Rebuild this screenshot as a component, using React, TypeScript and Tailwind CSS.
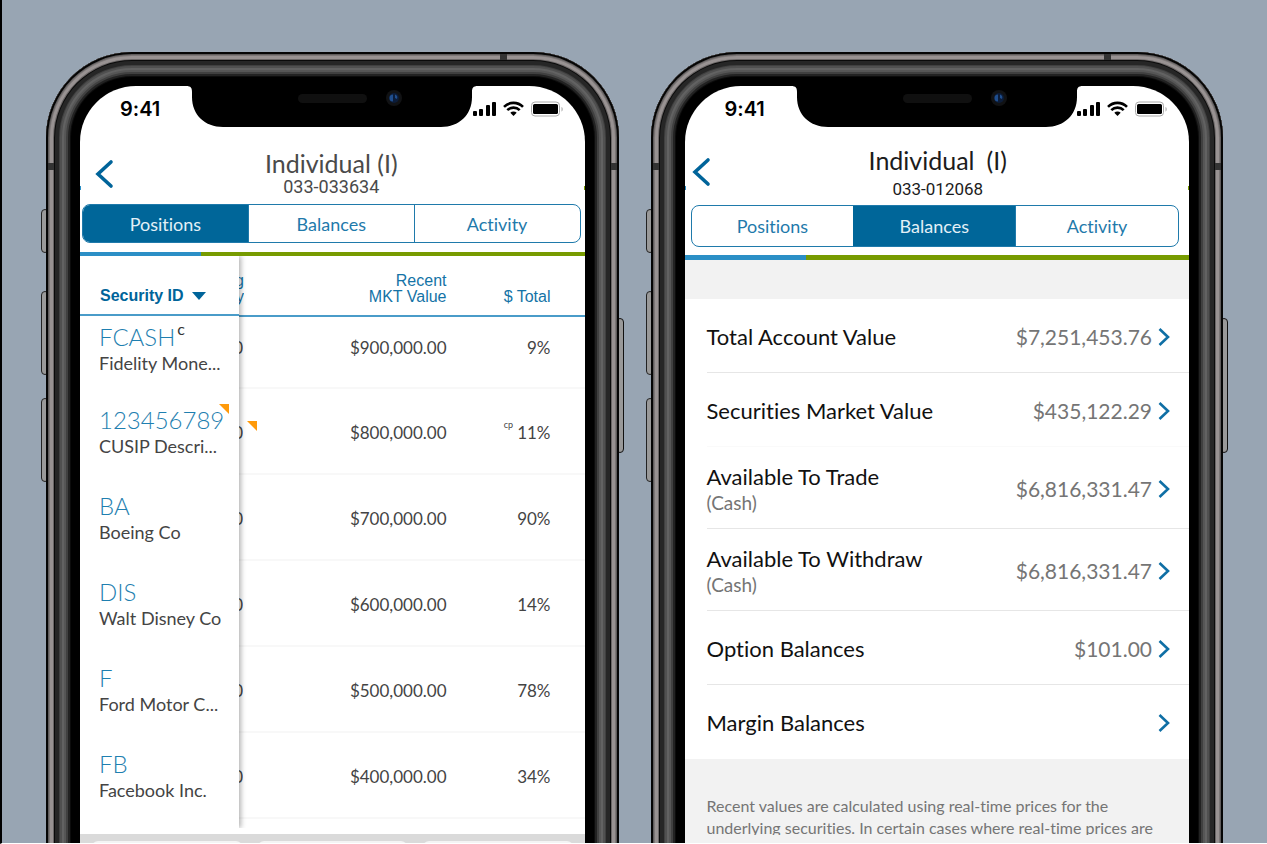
import type { ReactNode } from "react";

type Position = {
  symbol: string;
  mark?: string;
  name: string;
  value: string;
  total: string;
  totalMark?: string;
  flagged?: boolean;
};

type Balance = {
  label: string;
  note?: string;
  amount?: string;
  row: string;
};

const positions: Position[] = [
  { symbol: "FCASH", mark: "c", name: "Fidelity Mone...", value: "$900,000.00", total: "9%" },
  { symbol: "123456789", name: "CUSIP Descri...", value: "$800,000.00", total: "11%", totalMark: "cp", flagged: true },
  { symbol: "BA", name: "Boeing Co", value: "$700,000.00", total: "90%" },
  { symbol: "DIS", name: "Walt Disney Co", value: "$600,000.00", total: "14%" },
  { symbol: "F", name: "Ford Motor C...", value: "$500,000.00", total: "78%" },
  { symbol: "FB", name: "Facebook Inc.", value: "$400,000.00", total: "34%" },
];

const balances: Balance[] = [
  { label: "Total Account Value", amount: "$7,251,453.76", row: "h-[74px] border-[#e6e6e6]" },
  { label: "Securities Market Value", amount: "$435,122.29", row: "h-[74px] border-[#fafafa]" },
  { label: "Available To Trade", note: "(Cash)", amount: "$6,816,331.47", row: "h-[82px] border-[#e6e6e6]" },
  { label: "Available To Withdraw", note: "(Cash)", amount: "$6,816,331.47", row: "h-[82px] border-[#e6e6e6]" },
  { label: "Option Balances", amount: "$101.00", row: "h-[74px] border-[#e6e6e6]" },
  { label: "Margin Balances", row: "h-[74px] border-transparent" },
];

const Notch = () => (
  <svg
    className="absolute left-1/2 top-0 -translate-x-1/2 -mt-px"
    width="292"
    height="42"
    viewBox="0 0 292 42"
  >
    <path d="M0 0H292V1C287 1 286 3 286 7V12C286 30 273 42 255 42H37C19 42 6 30 6 12V7C6 3 5 1 0 1Z" fill="#000" />
    <rect x="112" y="9" width="69" height="9" rx="4.5" fill="#101010" />
    <circle cx="208" cy="13" r="8" fill="#111214" />
    <circle cx="208" cy="13" r="5" fill="#0c1c38" />
    <path d="M207 9.500A3.500 3.500 0 0 0 207 16.500Z M209 9.500A3.500 3.500 0 0 1 211 14L209 13Z" fill="#1f4d8c" />
  </svg>
);

const StatusBar = () => (
  <div className="h-[46px] flex items-center justify-between pl-10 pr-[21px]">
    <span className="font-[Inter,sans-serif] font-semibold text-[20px] leading-6 text-black">
      9:41
    </span>
    <svg width="92" height="16" viewBox="0 0 92 16">
      <g fill="#000">
        <rect x="1" y="10" width="4" height="5" rx="1" />
        <rect x="7" y="8" width="4" height="7" rx="1" />
        <rect x="14" y="4" width="4" height="11" rx="1" />
        <rect x="20" y="1" width="4" height="14" rx="1" />
        <path d="M41.500 15L38.300 11.800A4.600 4.600 0 0 1 44.700 11.800Z" />
      </g>
      <g fill="none" stroke="#000" strokeWidth="2.600">
        <path d="M35.300 9.200A8.800 8.800 0 0 1 47.700 9.200" />
        <path d="M32 5.800A13.500 13.500 0 0 1 51 5.800" />
      </g>
      <rect x="59.500" y="1" width="28" height="14" rx="3.500" fill="none" stroke="#aaa" />
      <rect x="61" y="3" width="25" height="10" rx="1.500" fill="#000" />
      <path d="M89.500 6v4.500c1.600-.6 1.600-3.900 0-4.500Z" fill="#aaa" />
    </svg>
  </div>
);

const Phone = ({ children }: { children: ReactNode }) => (
  <section className="relative -mb-24">
    <span className="absolute -left-[5px] top-[157px] w-2 h-11 rounded-sm border border-[#222] bg-[#999]" />
    <span className="absolute -left-[5px] top-[239px] w-2 h-[84px] rounded-sm border border-[#222] bg-[#999]" />
    <span className="absolute -left-[5px] top-[346px] w-2 h-[84px] rounded-sm border border-[#222] bg-[#999]" />
    <span className="absolute -right-[5px] top-[266px] w-2 h-[135px] rounded-sm border border-[#111] bg-[#999]" />
    <div className="relative h-full rounded-[86px] bg-black px-[34px] pt-[34px] shadow-[inset_0_0_0_2px_#050505,inset_0_0_0_3px_#5f5c5c,inset_0_0_0_4px_#7c7777,inset_0_0_0_7px_#989292,inset_0_0_0_8px_#6a6666,inset_0_0_0_9px_#0a0a0a,inset_0_0_0_13px_#262626,inset_0_0_0_14px_#404040,inset_0_0_0_16px_#505050,inset_0_0_0_18px_#626262,inset_0_0_0_20px_#565656,inset_0_0_0_22px_#404040,inset_0_0_0_24px_#222,inset_0_0_0_25px_#0c0c0c]">
      <span className="absolute left-[2px] top-[111px] w-[6px] h-[7px] bg-[#333]" />
      <span className="absolute right-[2px] top-[111px] w-[6px] h-[7px] bg-[#333]" />
      <span className="absolute right-[112px] top-[2px] w-[7px] h-[6px] bg-[#333]" />
      <div className="relative h-full overflow-hidden rounded-t-[56px] bg-white flex flex-col font-[Lato,sans-serif] [font-variant-ligatures:none]">
        <Notch />
        <span className="absolute left-0 top-[100px] w-px h-1 bg-[#2b8fc6]" />
        <span className="absolute right-0 top-[100px] w-px h-1 bg-[#779b00]" />
        <StatusBar />
        {children}
      </div>
    </div>
  </section>
);

const BackButton = () => (
  <button type="button" aria-label="Back">
    <svg width="20" height="30" viewBox="0 0 20 30" fill="none" stroke="#00649a" strokeWidth="3.600">
      <path d="M17 3L4 15L17 27" strokeLinecap="round" />
    </svg>
  </button>
);

const Tabs = ({ active, className }: { active: string; className: string }) => (
  <nav className={`flex rounded-lg border border-[#1f7aab] overflow-hidden ${className}`}>
    {["Positions", "Balances", "Activity"].map((tab) => (
      <button
        key={tab}
        type="button"
        className={
          tab === active
            ? "flex-1 text-lg bg-[#006699] text-[#e3f0f7]"
            : "flex-1 text-lg text-[#1f7aab] not-first:border-l border-[#1f7aab]"
        }
      >
        {tab}
      </button>
    ))}
  </nav>
);

const Progress = ({ className }: { className: string }) => (
  <div className={`flex shrink-0 ${className}`}>
    <span className="w-[24%] bg-[#2b8fc6]" />
    <span className="flex-1 bg-[#779b00]" />
  </div>
);

const Flag = ({ className }: { className: string }) => (
  <svg className={`absolute ${className}`} width="10" height="10" viewBox="0 0 10 10">
    <path d="M0 0H10V10Z" fill="#ff9a0a" />
  </svg>
);

const Chevron = () => (
  <svg width="12" height="20" viewBox="0 0 12 20" fill="none" stroke="#0f6fa5" strokeWidth="2.600">
    <path d="M1.500 2L10 10L1.500 18" />
  </svg>
);

const PositionsScreen = () => (
  <Phone>
    <header className="h-[72px] shrink-0 flex pl-[14px]">
      <div className="w-8 pt-[27px]">
        <BackButton />
      </div>
      <div className="flex-1 pt-[17px] pr-12 text-center text-[#4a4a4a]">
        <h1 className="text-[25px] leading-7">Individual (I)</h1>
        <p className="font-[Roboto,sans-serif] text-[18px] leading-5">033-033634</p>
      </div>
    </header>
    <Tabs active="Positions" className="h-[39px] shrink-0 ml-0.5 mr-1" />
    <Progress className="mt-[9px] h-1" />
    <div className="flex">
      <div className="relative z-10 w-[159px] h-[572px] bg-white shadow-[2px_0_5px_rgba(0,0,0,0.3)] [clip-path:inset(0_-10px_0_0)]">
        <table className="w-full">
          <thead>
            <tr className="h-[59px] border-b-2 border-[#4a9cc9]">
              <th className="pl-5 pb-2 align-bottom text-left">
                <button type="button" className="flex items-center gap-2 font-['Liberation_Sans',Arial,sans-serif] text-base leading-5 font-bold text-[#00649a]">
                  Security ID
                  <svg width="14" height="8" viewBox="0 0 14 8">
                    <path d="M0 0H14L7 8Z" fill="#00649a" />
                  </svg>
                </button>
              </th>
            </tr>
          </thead>
          <tbody>
            {positions.map((p) => (
              <tr key={p.symbol} className="group h-[86px] first:h-[74px]">
                <td className="pl-[19px] group-first:pb-2">
                  <div className="relative mr-[10px]">
                    <a href="#" className="flex text-[24px] leading-7 font-light text-[#1f7fb0]">
                      {p.symbol}
                      {p.mark && (
                        <span className="pl-0.5 text-base leading-3 font-normal text-[#333]">{p.mark}</span>
                      )}
                    </a>
                    {p.flagged && <Flag className="right-0 -top-0.5" />}
                    <p className="text-[18px] leading-6 text-[#444]">{p.name}</p>
                  </div>
                </td>
              </tr>
            ))}
          </tbody>
        </table>
      </div>
      <div className="flex-1">
        <table className="w-full text-right text-[17px] text-[#444]">
          <thead>
            <tr className="h-[60px] border-b-2 border-[#4a9cc9] font-['Liberation_Sans',Arial,sans-serif] text-base leading-4 text-[#1473a6]">
              <th className="w-[5px] p-0 pb-[10px] align-bottom font-normal">
                <span className="w-[5px] flex justify-end overflow-hidden">g</span>
                <span className="w-[5px] flex justify-end overflow-hidden">y</span>
              </th>
              <th className="pb-[10px] align-bottom font-normal">
                Recent
                <br />
                MKT Value
              </th>
              <th className="pb-[10px] pr-[34px] w-[138px] align-bottom font-normal">$ Total</th>
            </tr>
          </thead>
          <tbody>
            {positions.map((p) => (
              <tr key={p.symbol} className="group h-[86px] first:h-[72px] border-b-2 border-[#f8f8f8]">
                <td className="w-[5px] p-0 pt-1 group-first:pb-3">
                  <span className="relative flex h-6">
                    <span className="w-1 leading-6 flex justify-end overflow-hidden">0</span>
                    {p.flagged && <Flag className="left-2 top-0" />}
                  </span>
                </td>
                <td className="pt-1 group-first:pb-3 leading-6">{p.value}</td>
                <td className="pt-1 group-first:pb-3 leading-6 pr-[34px]">
                  <span className="flex justify-end">
                    {p.totalMark && (
                      <span className="mr-1 text-[9px] leading-2">{p.totalMark}</span>
                    )}
                    {p.total}
                  </span>
                </td>
              </tr>
            ))}
          </tbody>
        </table>
      </div>
    </div>
    <div className="mt-[6px] flex-1 flex gap-4 bg-[#dadada] px-3 pt-[7px]">
      <span className="flex-1 rounded-t-md bg-[#f4f4f4]" />
      <span className="flex-1 rounded-t-md bg-[#f4f4f4]" />
      <span className="flex-1 rounded-t-md bg-[#f4f4f4]" />
    </div>
  </Phone>
);

const BalancesScreen = () => (
  <Phone>
    <header className="h-[73px] shrink-0 flex pl-[6px]">
      <div className="w-8 pt-[25px]">
        <BackButton />
      </div>
      <div className="flex-1 pt-[14px] pr-9 text-center text-[#1c1c1c]">
        <h1 className="text-[25px] leading-7 flex justify-center gap-3">
          <span>Individual</span>
          <span>(I)</span>
        </h1>
        <p className="mt-[5px] font-[Roboto,sans-serif] text-[17px] leading-5">033-012068</p>
      </div>
    </header>
    <Tabs active="Balances" className="h-[42px] shrink-0 ml-[6px] mr-[10px]" />
    <Progress className="mt-2 h-[5px]" />
    <div className="flex-1 bg-[#f2f2f2] pt-[39px]">
      <ul className="bg-white pl-[22px]">
        {balances.map((b) => (
          <li key={b.label} className={`border-b ${b.row}`}>
            <button type="button" className="w-full h-full flex items-center pt-0.5 pr-[19px] text-left">
              <span className="flex-1 text-[22px] leading-7 text-[#111]">
                {b.label}
                {b.note && <span className="block text-[19px] leading-6 text-[#757575]">{b.note}</span>}
              </span>
              <span className="mr-[6px] text-[21px] leading-7 text-[#757575]">{b.amount}</span>
              <Chevron />
            </button>
          </li>
        ))}
      </ul>
      <p className="px-[22px] mt-9 h-[40px] overflow-hidden text-[16px] leading-[22px] text-[#757575]">
        Recent values are calculated using real-time prices for the
        <br />
        underlying securities. In certain cases where real-time prices are
      </p>
    </div>
  </Phone>
);

export default function App() {
  return (
    <main className="h-screen overflow-hidden grid grid-cols-2 grid-rows-1 gap-8 px-11 pt-[52px] bg-[#98a5b3] border-l-2 border-l-black border-b border-b-white">
      <PositionsScreen />
      <BalancesScreen />
    </main>
  );
}
